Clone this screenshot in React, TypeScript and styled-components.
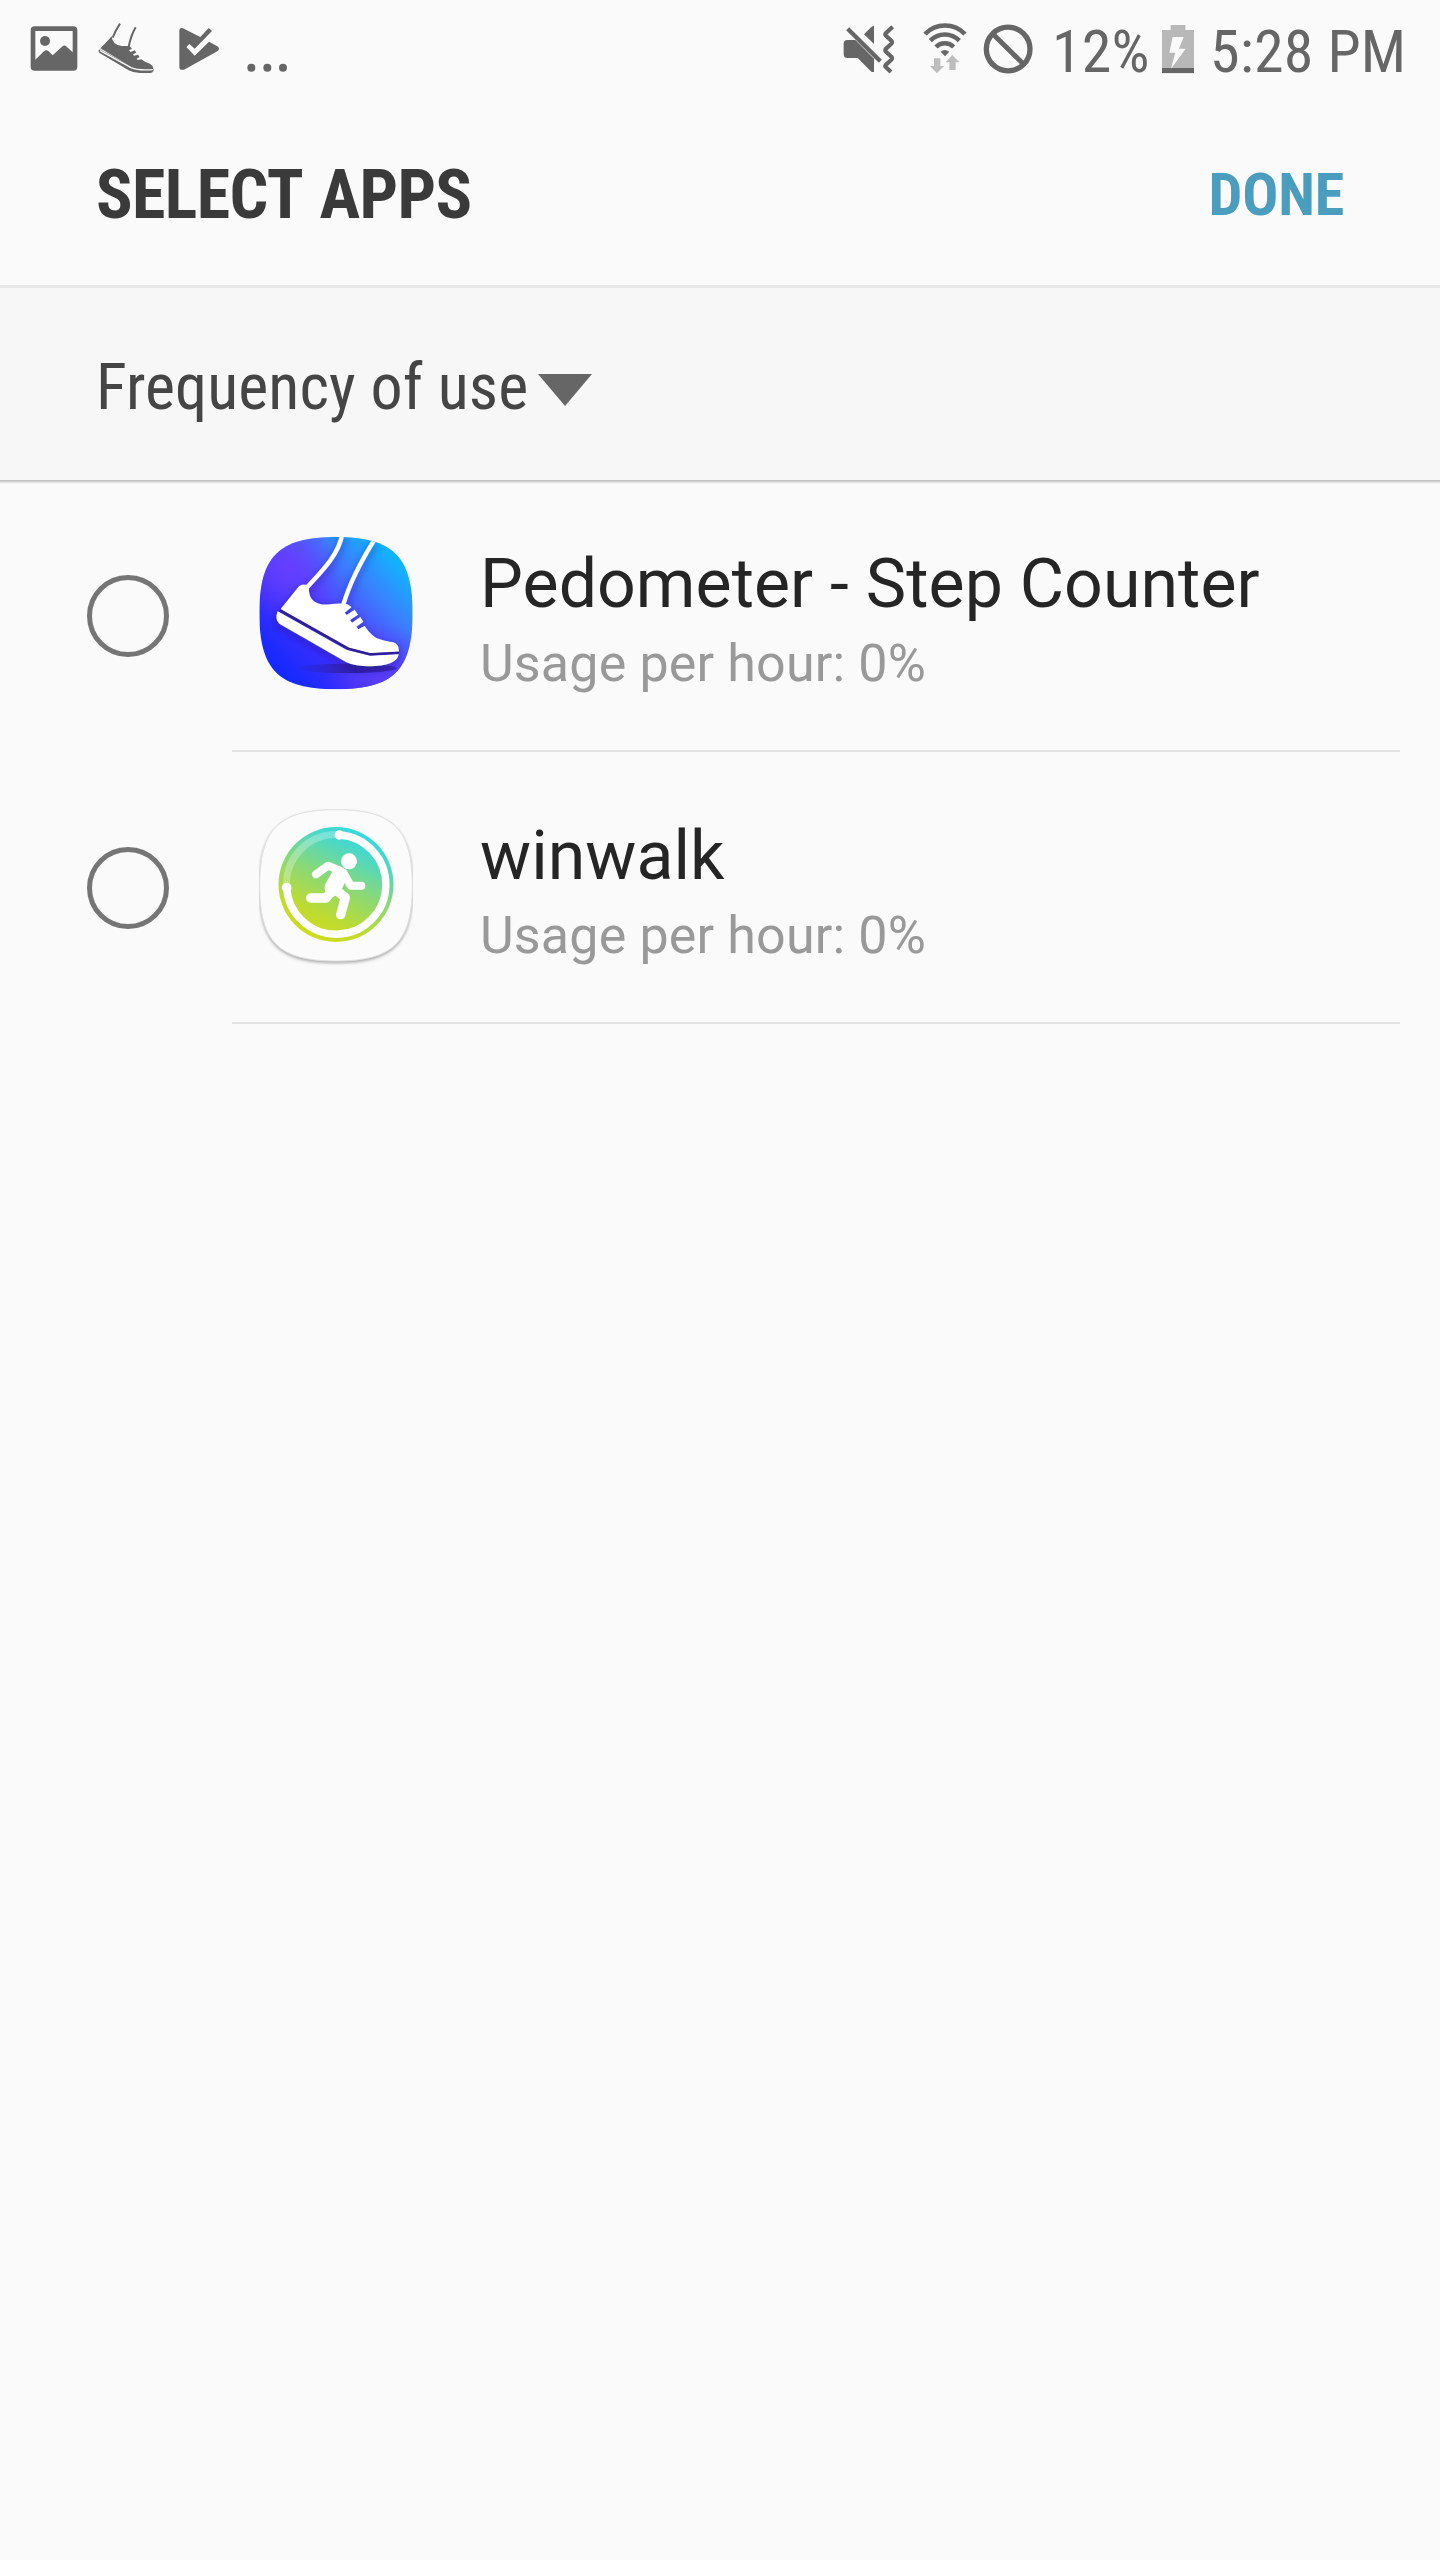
import React from "react";
import styled, { createGlobalStyle } from "styled-components";

const GlobalStyle = createGlobalStyle`
  * { box-sizing: border-box; }
  body { margin: 0; background: #fafafa; }
`;

const Screen = styled.div`
  width: 1440px;
  height: 2560px;
  background: #fafafa;
  font-family: Roboto, "Liberation Sans", sans-serif;
  overflow: hidden;
`;

const condensed = `
  font-family: "Roboto Condensed", Roboto, "Liberation Sans", sans-serif;
  font-stretch: condensed;
`;

const StatusBar = styled.header`
  display: flex;
  justify-content: space-between;
  height: 103px;
  padding: 0 36px 0 30px;
  color: #666;
`;

const StatusGroup = styled.div`
  display: flex;
  align-items: flex-start;
`;

const Glyph = styled.svg<{ $gap?: number }>`
  display: block;
  flex: none;
  margin-left: ${(p) => p.$gap ?? 0}px;
`;

const StatusText = styled.span<{ $gap: number; $width: number }>`
  ${condensed}
  flex: none;
  width: ${(p) => p.$width}px;
  margin-left: ${(p) => p.$gap}px;
  font-size: 60px;
  line-height: 103px;
  letter-spacing: 0.15px;
  white-space: nowrap;
`;

const TitleBar = styled.div`
  display: flex;
  align-items: center;
  justify-content: space-between;
  height: 185px;
  padding: 1px 96px 0 96px;
  border-bottom: 3px solid #e8e8e8;
`;

const Title = styled.h1`
  ${condensed}
  margin: 0;
  font-size: 68px;
  font-weight: 700;
  line-height: 80px;
  letter-spacing: -0.6px;
  word-spacing: 3.3px;
  color: #3a3a3a;
  white-space: nowrap;
`;

const DoneButton = styled.button`
  ${condensed}
  padding: 0;
  border: 0;
  background: none;
  font-size: 60px;
  font-weight: 700;
  line-height: 70px;
  letter-spacing: -0.2px;
  color: #4a9dbd;
`;

const SortBar = styled.div`
  display: flex;
  align-items: center;
  height: 192px;
  padding: 8px 0 0 96px;
  background: #f7f7f7;
  box-shadow: 0 1px 0 #c2c2c2, 0 2px 0 #d0d0d0, 0 3px 0 #e6e6e6, 0 4px 0 #f3f3f3;
`;

const SortLabel = styled.span`
  ${condensed}
  width: 442px;
  font-size: 64px;
  line-height: 80px;
  letter-spacing: 0.08px;
  color: #454545;
  white-space: nowrap;
`;

const DownTriangle = styled.span`
  width: 54px;
  height: 32px;
  margin-top: 4px;
  background: #666;
  clip-path: polygon(0 0, 100% 0, 50% 100%);
`;

const List = styled.ul`
  margin: 0;
  padding: 0;
  list-style: none;
`;

const Row = styled.li`
  display: flex;
  height: 272px;
`;

const RadioCell = styled.div`
  display: flex;
  width: 232px;
  padding: 95px 0 0 87px;
`;

const Radio = styled.span`
  width: 82px;
  height: 82px;
  border: 5px solid #757575;
  border-radius: 50%;
`;

const RowContent = styled.div`
  display: flex;
  flex: 1;
  margin-right: 40px;
  padding-left: 27px;
  border-bottom: 2px solid #e4e4e4;
`;

const IconSlot = styled.div`
  width: 221px;
  padding-top: 57px;
`;

const RowText = styled.div`
  display: flex;
  flex-direction: column;
  padding-top: 64px;
`;

const AppName = styled.span`
  font-size: 68px;
  line-height: 80px;
  letter-spacing: 0.05px;
  color: #252525;
  white-space: nowrap;
`;

const AppUsage = styled.span`
  font-size: 52px;
  line-height: 80px;
  letter-spacing: 0.15px;
  color: #999;
  white-space: nowrap;
`;

const GREY = "#666";

const PictureGlyph = () => (
  <Glyph width="48" height="100" viewBox="90 0 144 300">
    <path fill={GREY} fillRule="evenodd" d="M104 79h116a12 12 0 0 1 12 12v109a12 12 0 0 1-12 12H104a12 12 0 0 1-12-12V91a12 12 0 0 1 12-12zM106 93v86l26-25q7-6 14 0l12 12 28-26q7-7 14 0l18 17V93z" />
    <circle cx="135" cy="123" r="15" fill={GREY} />
  </Glyph>
);

const ShoeGlyph = () => (
  <Glyph width="58" height="100" viewBox="291 0 174 300" $gap={19}>
    <path fill={GREY} d="M335 109q2 27 30 29h24l7 8-9 5 5 5 12-5 5 7-10 5 3 4 12-3 5 7-9 5 3 4 11-2q10 8 22 12 16 6 14 21-38 5-62-8L301 145q16-15 34-36z" />
    <path fill={GREY} d="M299 148l92 50q22 13 69 9v7q-2 5-10 5h-30q-20 0-34-8l-86-51q-8-6-1-12z" />
    <path fill="none" stroke="#fafafa" strokeWidth="4" d="M300 152l93 51q20 9 66 6" />
    <path fill="none" stroke={GREY} strokeWidth="6" d="M338 113q8-21 22-42M386 140q7-34 21-58" />
  </Glyph>
);

const PlayCheckGlyph = () => (
  <Glyph width="42" height="100" viewBox="534 0 126 300" $gap={23}>
    <path fill={GREY} d="M538 94q0-13 11-9L601 111 626 84 636 93 584 146 568 132 559 141 584 167 627 125 652 139q10 7 0 15L552 209q-14 3-14-9z" />
  </Glyph>
);

const MoreGlyph = () => (
  <Glyph width="44" height="100" viewBox="738 0 132 300" $gap={26}>
    {[754, 802, 849].map((x) => (
      <circle key={x} cx={x} cy="203" r="12" fill={GREY} />
    ))}
  </Glyph>
);

const MuteGlyph = () => (
  <Glyph width="52" height="100" viewBox="70 0 156 300">
    <path fill={GREY} d="M83 120h24l56 56v40q-5 1-8-1l-41-41H83q-11 0-11-11v-32q0-11 11-11z" />
    <path fill={GREY} d="M133 103l22-22q4-3 8-3v54z" />
    <path fill="none" stroke={GREY} strokeWidth="13" d="M84 86l98 98" />
    <path fill="none" stroke={GREY} strokeWidth="12.5" strokeLinejoin="round" d="M219 80l-20 19q-4 4 0 8l16 15q4 5 0 9l-16 15q-4 5 0 9l16 15q4 5 0 9l-16 15q-4 4 0 8l15 14" />
  </Glyph>
);

const WifiGlyph = () => (
  <Glyph width="44" height="100" viewBox="311 0 132 300" $gap={28}>
    <g fill="none" stroke={GREY} strokeWidth="13.5">
      <path d="M317 102a83 83 0 0 1 120 0" />
      <path d="M333 122a60 60 0 0 1 87 0" />
      <path d="M350 141a37 37 0 0 1 53 0" />
    </g>
    <path fill={GREY} d="M364 155q12-10 26 0l-13 14z" />
    <path fill="#bdbdbd" d="M344 175h19v23h11l-21 22-21-22h12zM390 210h19v-23h11l-21-22-20 22h11z" />
  </Glyph>
);

const BlockedGlyph = () => (
  <Glyph width="52" height="100" viewBox="487 0 156 300" $gap={15}>
    <g fill="none" stroke={GREY} strokeWidth="16">
      <circle cx="565.5" cy="147" r="65.5" />
      <path d="M519 101l93 92" strokeWidth="15" />
    </g>
  </Glyph>
);

const BatteryGlyph = () => (
  <Glyph width="32" height="100" viewBox="126 0 96 300" $gap={12}>
    <path fill="#b8b8b8" d="M152 75h44v15h26v130h-96V90h26z" />
    <path fill={GREY} d="M126 204h96v15h-96z" />
    <path fill="#fafafa" d="M158 111h33l-14 35h20l-44 60 13-48h-18z" />
  </Glyph>
);

const PedometerIcon = () => (
  <Glyph width="154" height="154" viewBox="597 81 462 462">
    <defs>
      <linearGradient id="pedo" x1="640" y1="500" x2="1020" y2="130" gradientUnits="userSpaceOnUse">
        <stop offset="0" stopColor="#0d28ff" />
        <stop offset="0.3" stopColor="#3a2ffc" />
        <stop offset="0.52" stopColor="#5046ff" />
        <stop offset="0.74" stopColor="#3a80ff" />
        <stop offset="0.95" stopColor="#12b2ff" />
      </linearGradient>
      <radialGradient id="violet" cx="680" cy="170" r="160" gradientUnits="userSpaceOnUse">
        <stop offset="0" stopColor="#6a3dff" stopOpacity="0.9" />
        <stop offset="1" stopColor="#6a3dff" stopOpacity="0" />
      </radialGradient>
      <radialGradient id="violetLow" cx="970" cy="510" r="170" gradientUnits="userSpaceOnUse">
        <stop offset="0" stopColor="#5c3cf5" stopOpacity="0.9" />
        <stop offset="1" stopColor="#5c3cf5" stopOpacity="0" />
      </radialGradient>
      <linearGradient id="ground" x1="700" y1="0" x2="1010" y2="0" gradientUnits="userSpaceOnUse">
        <stop offset="0" stopColor="#2a1c96" stopOpacity="0" />
        <stop offset="0.6" stopColor="#2a1c96" stopOpacity="0.85" />
        <stop offset="1" stopColor="#2a1c96" stopOpacity="0.6" />
      </linearGradient>
      <clipPath id="pedoClip">
        <path d="M828 81C1000 81 1058 140 1058 310S1000 538 828 538 598 480 598 310 656 81 828 81z" />
      </clipPath>
      <filter id="soft" x="-20%" y="-20%" width="140%" height="140%">
        <feDropShadow dx="0" dy="10" stdDeviation="12" floodColor="#20108c" floodOpacity="0.5" />
      </filter>
    </defs>
    <g clipPath="url(#pedoClip)">
      <path fill="url(#pedo)" d="M590 75h480v470H590z" />
      <path fill="url(#violet)" d="M590 75h480v470H590z" />
      <path fill="url(#violetLow)" d="M590 75h480v470H590z" />
      <ellipse cx="860" cy="475" rx="150" ry="14" fill="url(#ground)" />
      <g filter="url(#soft)">
        <path fill="none" stroke="#fff" strokeWidth="13" d="M847 70C838 130 790 180 742 231M946 85C905 150 868 222 850 284" />
        <path fill="#fff" d="M717 229q12-11 30-1-4 45 33 54 12 3 36 0 36-4 49 2 5 2 9 8l-20 16 6 7 24-16 10 15-24 16 6 8 25-17 9 14-21 15 6 8 19-10q22 34 46 40 26 8 40 9 17 5 17 29l-87 3-62-16-206-116z" />
        <path fill="#fff" d="M653 304l206 115 72 18 85-4q-2 17-24 26-26 10-63 10-42 0-71-13L658 341q-15-12-5-37z" />
      </g>
      <path fill="none" stroke="#2e1f96" strokeWidth="7" d="M659 301l207 116 64 16 87-5" />
    </g>
  </Glyph>
);

const WinwalkIcon = () => (
  <Glyph width="154" height="160" viewBox="597 57 462 480">
    <defs>
      <linearGradient id="win" x1="755" y1="440" x2="900" y2="130" gradientUnits="userSpaceOnUse">
        <stop offset="0" stopColor="#cddc1c" />
        <stop offset="0.2" stopColor="#bfdb30" />
        <stop offset="0.55" stopColor="#86d97c" />
        <stop offset="0.85" stopColor="#4ad8c8" />
        <stop offset="1" stopColor="#34dadc" />
      </linearGradient>
      <filter id="plate" x="-10%" y="-10%" width="120%" height="120%" colorInterpolationFilters="sRGB">
        <feDropShadow dx="0" dy="5" stdDeviation="4" floodColor="#000" floodOpacity="0.32" />
      </filter>
    </defs>
    <path filter="url(#plate)" fill="#fbfbfb" stroke="#e0e0e0" strokeWidth="3" d="M828 59C1000 59 1057 118 1057 287S1000 513 828 513 599 456 599 287 656 59 828 59z" />
    <circle cx="828" cy="283.5" r="172.5" fill="url(#win)" />
    <path fill="none" stroke="#fff" strokeOpacity="0.28" strokeWidth="21" d="M680 293A149 149 0 0 1 838 134" />
    <path fill="none" stroke="#fff" strokeWidth="22" strokeLinecap="round" d="M838 135A149 149 0 1 1 680 293" />
    <circle cx="838" cy="135" r="14" fill="#fff" />
    <circle cx="680" cy="293" r="14.5" fill="#fff" />
    <circle cx="867" cy="214" r="24" fill="#fff" />
    <g fill="none" stroke="#fff" strokeWidth="24" strokeLinecap="round" strokeLinejoin="round">
      <path d="M768 253l36-26 36 15" />
      <path d="M850 248l22 39h32" />
      <path strokeWidth="28" d="M752 324h46l16-20" />
      <path strokeWidth="28" d="M826 298l30 25-14 51" />
    </g>
    <path fill="#fff" d="M804 226l46 12q14 8 14 20l-23 48-20 14-22-8q-8-14-3-30l24-42z" />
  </Glyph>
);

const apps = [
  { name: "Pedometer - Step Counter", usage: "Usage per hour: 0%", Icon: PedometerIcon },
  { name: "winwalk", usage: "Usage per hour: 0%", Icon: WinwalkIcon },
];

export default function App() {
  return (
    <Screen>
      <GlobalStyle />
      <StatusBar>
        <StatusGroup>
          <PictureGlyph />
          <ShoeGlyph />
          <PlayCheckGlyph />
          <MoreGlyph />
        </StatusGroup>
        <StatusGroup>
          <MuteGlyph />
          <WifiGlyph />
          <BlockedGlyph />
          <StatusText $gap={18} $width={98}>12%</StatusText>
          <BatteryGlyph />
          <StatusText $gap={16} $width={194}>5:28 PM</StatusText>
        </StatusGroup>
      </StatusBar>
      <TitleBar>
        <Title>SELECT APPS</Title>
        <DoneButton>DONE</DoneButton>
      </TitleBar>
      <SortBar>
        <SortLabel>Frequency of use</SortLabel>
        <DownTriangle />
      </SortBar>
      <List>
        {apps.map(({ name, usage, Icon }) => (
          <Row key={name}>
            <RadioCell>
              <Radio />
            </RadioCell>
            <RowContent>
              <IconSlot>
                <Icon />
              </IconSlot>
              <RowText>
                <AppName>{name}</AppName>
                <AppUsage>{usage}</AppUsage>
              </RowText>
            </RowContent>
          </Row>
        ))}
      </List>
    </Screen>
  );
}
